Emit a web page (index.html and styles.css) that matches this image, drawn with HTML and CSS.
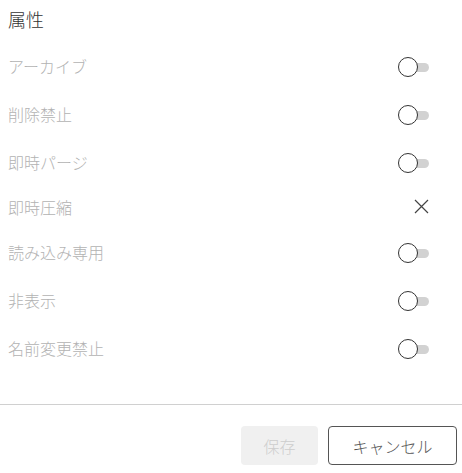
FILE: index.html
```html
<!DOCTYPE html>
<html lang="ja">
<head>
<meta charset="utf-8">
<link rel="stylesheet" href="styles.css">
</head>
<body>
<div class="panel">
  <div class="title">属性</div>
  <div class="list">
    <div class="row"><span class="label">アーカイブ</span><span class="ctl"><span class="toggle"><span class="track"></span><span class="knob"></span></span></span></div>
    <div class="row"><span class="label">削除禁止</span><span class="ctl"><span class="toggle"><span class="track"></span><span class="knob"></span></span></span></div>
    <div class="row"><span class="label">即時パージ</span><span class="ctl"><span class="toggle"><span class="track"></span><span class="knob"></span></span></span></div>
    <div class="row short"><span class="label">即時圧縮</span><span class="ctl end"><svg class="x" width="15" height="15" viewBox="0 0 15 15"><path d="M1 1 L14 14 M14 1 L1 14" stroke="#444" stroke-width="1.2" fill="none"/></svg></span></div>
    <div class="row"><span class="label">読み込み専用</span><span class="ctl"><span class="toggle"><span class="track"></span><span class="knob"></span></span></span></div>
    <div class="row"><span class="label">非表示</span><span class="ctl"><span class="toggle"><span class="track"></span><span class="knob"></span></span></span></div>
    <div class="row"><span class="label">名前変更禁止</span><span class="ctl"><span class="toggle"><span class="track"></span><span class="knob"></span></span></span></div>
  </div>
</div>
<div class="footer">
  <button class="btn save" disabled>保存</button>
  <button class="btn cancel">キャンセル</button>
</div>
</body>
</html>
```
FILE: styles.css
```css
html, body {
  margin: 0;
  padding: 0;
  background: #fff;
  font-family: "Noto Sans CJK JP", "Noto Sans", sans-serif;
  font-weight: 300;
}
.panel {
  padding: 0 32px 0 8px;
  height: 404px;
  border-bottom: 1px solid #d0d0d0;
  box-sizing: content-box;
}
.title {
  height: 43px;
  display: flex;
  align-items: center;
  padding-bottom: 6px;
  box-sizing: border-box;
  font-size: 18px;
  color: #333;
}
.list {
  display: flex;
  flex-direction: column;
}
.row {
  height: 48px;
  display: flex;
  align-items: center;
  justify-content: space-between;
}
.row.short {
  height: 42px;
}
.label {
  font-size: 16px;
  color: #b2b2b2;
  margin-top: -2px;
}
.ctl {
  width: 32px;
  display: flex;
  align-items: center;
  justify-content: flex-start;
}
.ctl.end {
  justify-content: flex-end;
  padding-right: 1px;
  margin-top: -4px;
}
.toggle {
  position: relative;
  width: 31px;
  height: 20px;
  display: block;
}
.track {
  position: absolute;
  left: 8px;
  right: 0;
  top: 6px;
  height: 9px;
  background: #d2d2d2;
  border-radius: 5px;
}
.knob {
  position: absolute;
  left: 0;
  top: 0;
  width: 18px;
  height: 18px;
  border: 1px solid #333;
  border-radius: 50%;
  background: #fff;
}
.footer {
  display: flex;
  justify-content: flex-end;
  gap: 10px;
  padding: 21px 5px 0 0;
}
.btn {
  height: 39px;
  font-family: "Noto Sans CJK JP", "Noto Sans", sans-serif;
  font-weight: 300;
  font-size: 16px;
  border-radius: 4px;
  padding: 0;
}
.save {
  width: 77px;
  background: #f0f0f0;
  color: #cdcdcd;
  border: none;
}
.cancel {
  width: 129px;
  background: #fff;
  color: #555;
  border: 1px solid #555;
}
```
